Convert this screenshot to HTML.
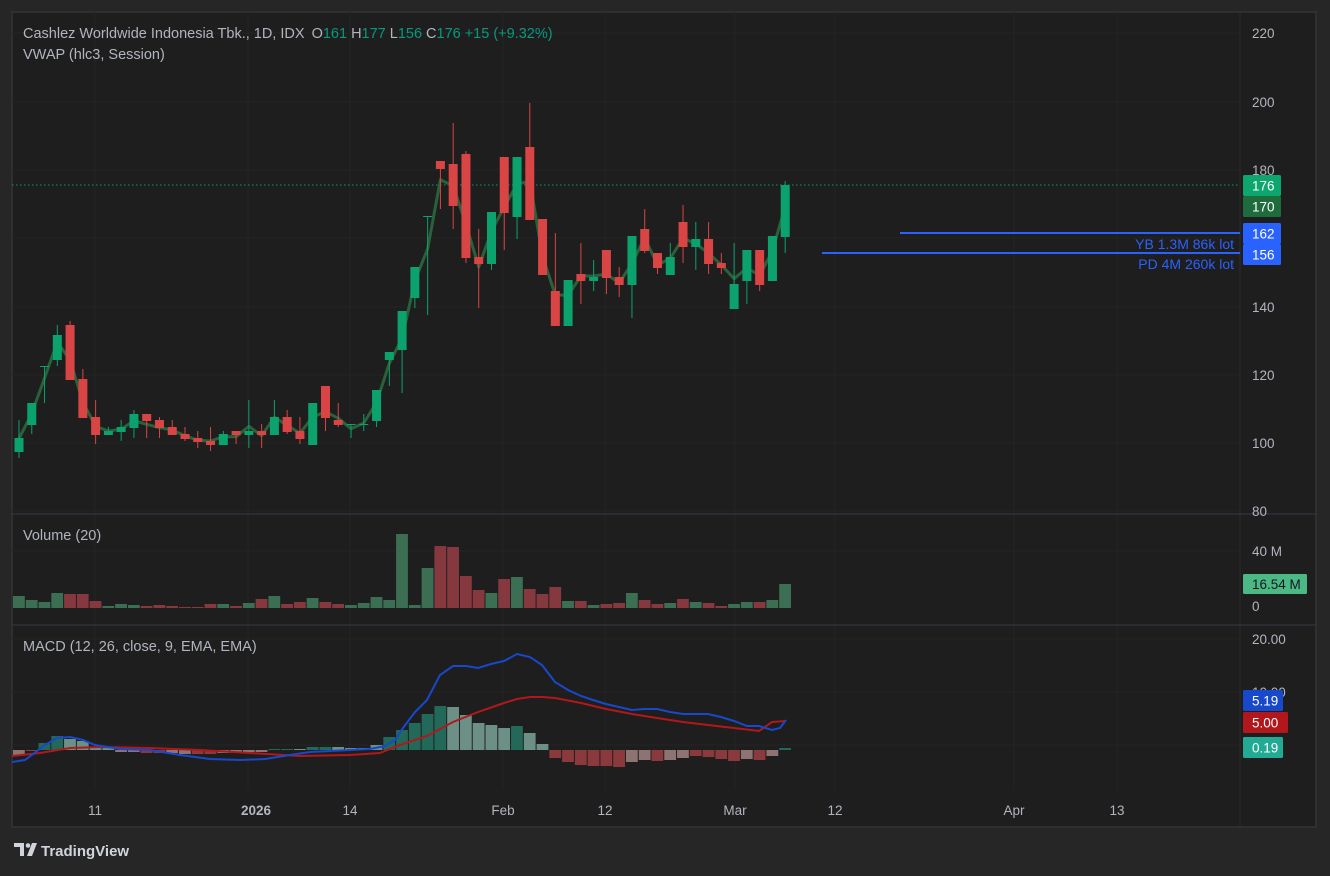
<!DOCTYPE html>
<html><head><meta charset="utf-8"><style>
html,body{margin:0;padding:0;background:#262626;width:1330px;height:871px;overflow:hidden;font-family:"Liberation Sans",sans-serif;}
#wrap{position:absolute;left:0;top:0;width:1330px;height:871px;}
svg text{font-family:"Liberation Sans",sans-serif;}
</style></head><body>
<div id="wrap">
<svg id="s" width="1330" height="871" xmlns="http://www.w3.org/2000/svg"></svg>
</div>
<script>
const C=[
[438,452,420,458,1],[403,425,403,434,1],[366,367,366,403,1],[335,360,325,366,1],[325,380,321,380,0],
[379,418,369,418,0],[417,435,400,444,0],[431,435,427,435,1],[427,432,420,441,1],[414,428,410,438,1],
[414,421,414,438,0],[420,428,417,438,0],[427,435,420,435,0],[434,439,427,441,0],[438,442,431,448,0],
[441,445,427,451,0],[434,445,431,445,1],[431,435,431,444,0],[431,435,400,448,1],[431,435,424,448,0],
[417,435,400,435,1],[417,432,410,434,0],[431,439,417,444,0],[403,445,403,445,1],[386,418,386,431,0],
[420,425,403,427,0],[424,425,424,438,1],[424,425,414,431,1],[390,421,390,427,1],[352,360,352,386,1],
[311,350,311,393,1],[267,298,267,308,1],[216,217,216,315,1],[161,169,161,209,0],[164,206,123,229,0],
[154,258,151,263,0],[257,264,229,308,0],[212,264,212,270,1],[157,213,157,250,0],[157,217,157,239,1],
[147,220,103,220,0],[219,275,219,275,0],[291,326,233,326,0],[280,326,280,326,1],[274,281,243,304,0],
[277,281,260,291,1],[250,278,250,294,0],[277,285,267,297,0],[236,285,236,318,1],[229,251,209,253,0],
[253,268,253,274,0],[257,275,243,275,1],[222,247,205,263,0],[239,247,222,270,1],[239,264,222,274,0],
[263,268,253,274,0],[284,309,243,309,1],[250,281,250,304,1],[250,285,250,291,0],[236,281,236,281,1],
[185,237,181,253,1]];
const V=[596,600,602,593,594,594,601,606,604,605,606,605,606,607,607,604,604,606,603,599,596,604,602,598,602,604,605,603,597,600,534,605,568,546,547,576,590,593,579,577,589,594,587,601,601,605,604,603,593,600,604,603,599,602,603,606,604,602,602,600,584];
const VCol=[1,1,1,1,0,0,0,1,1,1,0,0,0,0,0,0,1,0,1,0,1,0,0,1,0,0,1,1,1,1,1,1,1,0,0,0,0,1,0,1,0,0,0,1,0,1,0,0,1,0,0,1,0,1,0,0,1,1,0,1,1];
const H=[[755,3],[750,2],[743,0],[736,0],[739,1],[741,1],[748,1],[748,1],[752,3],[752,3],[753,2],[753,2],[753,3],[754,3],[754,2],[754,2],[753,3],[753,3],[752,3],[752,3],[749,0],[749,0],[749,1],[747,0],[747,0],[747,1],[748,1],[748,1],[745,1],[737,0],[730,0],[723,0],[714,0],[706,0],[707,1],[715,1],[723,1],[725,1],[728,1],[726,0],[733,1],[744,1],[758,2],[762,2],[765,2],[766,2],[766,2],[767,2],[762,3],[760,3],[761,2],[760,3],[758,3],[756,2],[757,2],[759,2],[761,2],[759,3],[760,2],[756,3],[748,0]];
const X=i=>19+12.77*i;
let o='';
o+='<rect x="12" y="12" width="1304" height="815" fill="#1e1e1e" stroke="#333" stroke-width="1.5"/>';
o+='<line x1="1240" y1="12" x2="1240" y2="827" stroke="#2c2c2c"/>';
[95,248,350,503,605,735,835,1014,1117].forEach(x=>{o+=`<line x1="${x}" y1="12" x2="${x}" y2="790" stroke="#242424"/>`;});
[33,102,170,238,307,375,443,511].forEach(y=>{o+=`<line x1="12" y1="${y}" x2="1240" y2="${y}" stroke="#242424"/>`;});
[551,639,692,745].forEach(y=>{o+=`<line x1="12" y1="${y}" x2="1240" y2="${y}" stroke="#242424"/>`;});
o+='<line x1="12" y1="514" x2="1316" y2="514" stroke="#363a45"/><line x1="12" y1="625" x2="1316" y2="625" stroke="#363a45"/>';
o+='<line x1="12" y1="185" x2="1240" y2="185" stroke="#089981" stroke-dasharray="1.5,2.5"/>';
let pts=C.map((c,i)=>{let cl=c[4]?c[0]:c[1];return X(i).toFixed(1)+','+((c[2]+c[3]+cl)/3).toFixed(1)}).join(' ');
o+=`<polyline points="${pts}" fill="none" stroke="#28613a" stroke-width="3" stroke-linejoin="round"/>`;
C.forEach((c,i)=>{const col=c[4]?'#0ca26e':'#d94545';const x=X(i);
o+=`<line x1="${x}" y1="${c[2]}" x2="${x}" y2="${c[3]}" stroke="${col}" stroke-width="1"/>`;
o+=`<rect x="${x-4.5}" y="${c[0]}" width="9" height="${Math.max(1,c[1]-c[0])}" fill="${col}"/>`;});
V.forEach((v,i)=>{o+=`<rect x="${X(i)-6}" y="${v}" width="11.8" height="${608-v}" fill="${VCol[i]?'#3c6e54':'#85383e'}"/>`;});
const HC=['#22695a','#6c8f86','#8a3a3d','#8e7373'];
H.forEach((h,i)=>{const y=h[0];const t=Math.min(y,750),b=Math.max(y,750);o+=`<rect x="${X(i)-6}" y="${t}" width="11.8" height="${Math.max(1,b-t)}" fill="${HC[h[1]]}"/>`;});
const blue=[[12,762],[25,760],[45,745],[57,738],[70,737],[83,740],[95,745],[120,749],[150,750],[180,755],[210,759],[240,760],[265,759],[290,755],[310,752],[330,751],[350,750],[370,749],[385,746],[395,740],[403,728],[415,712],[427,700],[440,675],[453,666],[466,666],[478,668],[491,664],[504,661],[517,654],[530,657],[542,665],[555,682],[568,690],[581,696],[593,700],[606,704],[619,707],[632,710],[644,709],[657,709],[670,712],[683,714],[695,714],[708,714],[721,717],[734,721],[747,726],[759,726],[772,730],[780,728],[786,720]];
const red=[[12,756],[40,753],[70,748],[100,747],[150,748],[200,750],[250,753],[300,756],[350,755],[380,753],[400,745],[427,736],[453,722],[478,712],[504,703],[517,699],[530,697],[542,697],[555,698],[581,703],[606,709],[632,714],[657,718],[683,722],[708,725],[734,728],[759,731],[772,722],[786,721]];
o+=`<polyline points="${red.join(' ')}" fill="none" stroke="#b2181b" stroke-width="2"/>`;
o+=`<polyline points="${blue.join(' ')}" fill="none" stroke="#1848cc" stroke-width="2"/>`;
o+='<line x1="900" y1="233" x2="1240" y2="233" stroke="#2962ff" stroke-width="2"/><line x1="822" y1="253" x2="1240" y2="253" stroke="#2962ff" stroke-width="2"/>';
o+='<text x="1234" y="249" text-anchor="end" font-size="14" fill="#2962ff">YB 1.3M 86k lot</text>';
o+='<text x="1234" y="269" text-anchor="end" font-size="14" fill="#2962ff">PD 4M 260k lot</text>';
[[220,38],[200,107],[180,175],[140,312],[120,380],[100,448],[80,516]].forEach(a=>{o+=`<text x="1252" y="${a[1]}" font-size="13.5" fill="#b2b5be">${a[0]}</text>`;});
o+='<text x="1252" y="556" font-size="13.5" fill="#b2b5be">40 M</text><text x="1252" y="611" font-size="13.5" fill="#b2b5be">0</text>';
o+='<text x="1252" y="644" font-size="13.5" fill="#b2b5be">20.00</text><text x="1252" y="697" font-size="13.5" fill="#b2b5be">10.00</text>';
function lab(y,h,w,bg,txt,fc){o+=`<rect x="1243" y="${y}" width="${w}" height="${h}" rx="1.5" fill="${bg}"/><text x="1252" y="${y+h/2+5}" font-size="13.5" fill="${fc||'#fff'}">${txt}</text>`;}
lab(175,21,38,'#0ca66e','176');lab(196,21,38,'#1e6b3c','170');
lab(223,21,38,'#2962ff','162');lab(244,21,38,'#2962ff','156');
lab(574,20,64,'#4cb985','16.54 M','#131722');
lab(690,21,40,'#1848cc','5.19');lab(712,21,45,'#b2181b','5.00');lab(737,21,40,'#22ab94','0.19');
[[95,'11'],[256,'2026'],[350,'14'],[503,'Feb'],[605,'12'],[735,'Mar'],[835,'12'],[1014,'Apr'],[1117,'13']].forEach(t=>{o+=`<text x="${t[0]}" y="815" text-anchor="middle" font-size="13.5" fill="#b2b5be" ${t[1]=='2026'?'font-weight="bold"':''}>${t[1]}</text>`;});
o+='<text x="23" y="38" font-size="14.5" fill="#b2b5be">Cashlez Worldwide Indonesia Tbk., 1D, IDX <tspan dx="3">O</tspan><tspan fill="#089981">161</tspan><tspan dx="4">H</tspan><tspan fill="#089981">177</tspan><tspan dx="4">L</tspan><tspan fill="#089981">156</tspan><tspan dx="4">C</tspan><tspan fill="#089981">176</tspan><tspan dx="4" fill="#089981">+15 (+9.32%)</tspan></text>';
o+='<text x="23" y="59" font-size="14.5" fill="#b2b5be">VWAP (hlc3, Session)</text>';
o+='<text x="23" y="540" font-size="14.5" fill="#b2b5be">Volume (20)</text>';
o+='<text x="23" y="651" font-size="14.5" fill="#b2b5be">MACD (12, 26, close, 9, EMA, EMA)</text>';
o+='<path d="M14 843h10v13h-4v-9h-6z" fill="#d1d4dc"/><circle cx="28" cy="845.5" r="2.3" fill="#d1d4dc"/><path d="M32 843h5l-5 13h-5z" fill="#d1d4dc"/>';
o+='<text x="41" y="856" font-size="15" font-weight="bold" fill="#d1d4dc">TradingView</text>';
document.getElementById('s').innerHTML=o;
</script>
</body></html>
